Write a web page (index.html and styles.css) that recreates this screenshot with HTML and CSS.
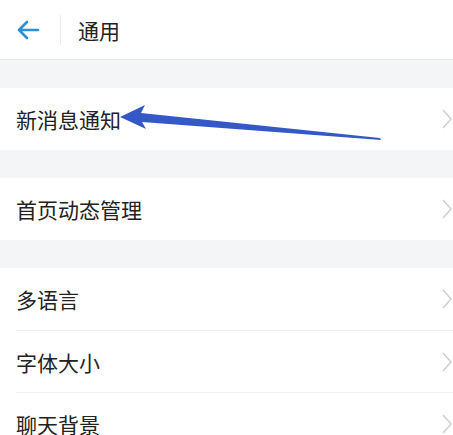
FILE: index.html
```html
<!DOCTYPE html>
<html lang="zh-CN">
<head>
  <meta charset="UTF-8">
  <meta name="viewport" content="width=device-width, initial-scale=1.0">
  <title>通用</title>
  <link rel="stylesheet" href="styles.css">
</head>
<body>
  <div class="page">
    <header class="topbar">
      <span class="back">
        <svg width="24" height="20" viewBox="0 0 24 20">
          <path d="M3 10 H22 M11 2 L3 10 L11 18" fill="none" stroke="#2b8fd4" stroke-width="2.6" stroke-linecap="round" stroke-linejoin="round"/>
        </svg>
      </span>
      <span class="sep"></span>
      <h1 class="title">通用</h1>
    </header>

    <div class="gap"></div>
    <div class="group">
      <div class="row"><span>新消息通知</span><svg class="chev" viewBox="0 0 12 20"><path d="M2 1 L10 10 L2 19"/></svg></div>
    </div>

    <div class="gap"></div>
    <div class="group">
      <div class="row"><span>首页动态管理</span><svg class="chev" viewBox="0 0 12 20"><path d="M2 1 L10 10 L2 19"/></svg></div>
    </div>

    <div class="gap"></div>
    <div class="group">
      <div class="row"><span>多语言</span><svg class="chev" viewBox="0 0 12 20"><path d="M2 1 L10 10 L2 19"/></svg></div>
      <div class="row"><span>字体大小</span><svg class="chev" viewBox="0 0 12 20"><path d="M2 1 L10 10 L2 19"/></svg></div>
      <div class="row"><span>聊天背景</span><svg class="chev" viewBox="0 0 12 20"><path d="M2 1 L10 10 L2 19"/></svg></div>
    </div>

    <!-- annotation arrow drawn over the list -->
    <svg class="pointer" width="453" height="435" viewBox="0 0 453 435">
      <polygon points="120,117 145,105 141,113 380,138 381,140 142,122 146,129" fill="#3558c8"/>
    </svg>
  </div>
</body>
</html>
```

FILE: styles.css
```css
body {
  margin: 0;
  background: #fff;
  font-family: "Noto Sans CJK SC", "Noto Sans", sans-serif;
  color: #222;
}

.page {
  position: relative;
  width: 453px;
  height: 435px;
  overflow: hidden;
}

.topbar {
  display: flex;
  align-items: center;
  height: 60px;
  border-bottom: 1px solid #e9eaed;
  box-sizing: border-box;
}

.back {
  display: flex;
  align-items: center;
  width: 60px;
  padding-left: 16px;
  box-sizing: border-box;
}

.sep {
  width: 1px;
  height: 30px;
  background: #ececec;
}

.title {
  margin: 0 0 0 17px;
  font-size: 21px;
  font-weight: normal;
}

.gap {
  height: 28px;
  background: #f4f5f7;
}

.row {
  display: flex;
  align-items: center;
  justify-content: space-between;
  height: 62px;
  margin-left: 16px;
  font-size: 21px;
  border-top: 1px solid #eeeff1;
  box-sizing: border-box;
}

.row:first-child {
  border-top: none;
}

.chev {
  width: 12px;
  height: 20px;
  fill: none;
  stroke: #cfcfcf;
  stroke-width: 1.5;
}

.pointer {
  position: absolute;
  left: 0;
  top: 0;
}
```
